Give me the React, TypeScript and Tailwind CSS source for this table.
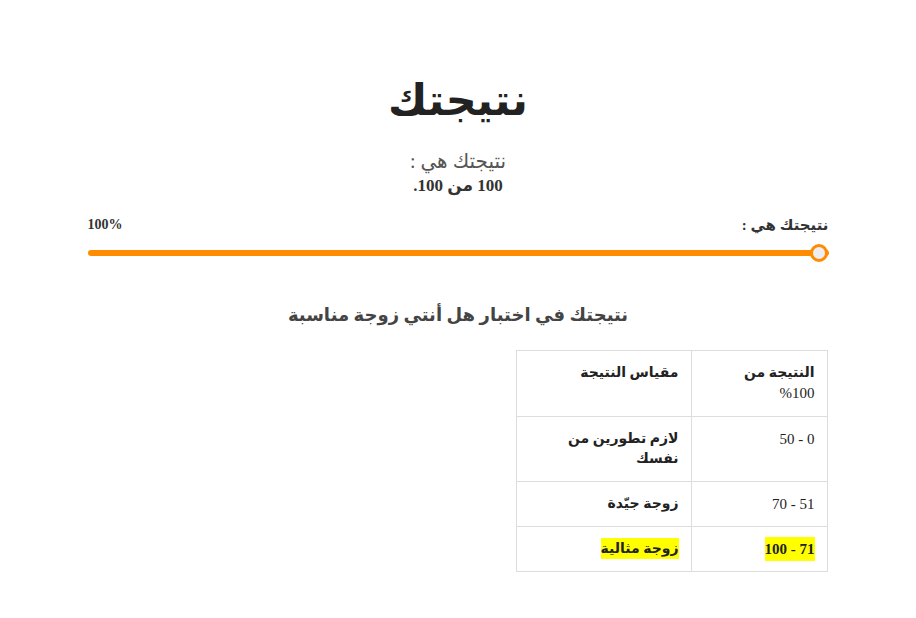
const rows = [
  { range: "0 - 50", label: "لازم تطورين من نفسك", hl: false },
  { range: "51 - 70", label: "زوجة جيّدة", hl: false },
  { range: "71 - 100", label: "زوجة مثالية", hl: true },
];

const App: React.FC = () => {
  return (
    <div
      dir="rtl"
      className="min-h-screen bg-white text-[#333]"
      style={{ fontFamily: '"Liberation Serif", "DejaVu Sans", serif' }}
    >
      <div className="mx-auto w-[741px] pt-[74px]">
        <h1 className="text-center text-[43px] font-bold leading-[54px] text-[#222]">
          نتيجتك
        </h1>
        <div className="mt-[20px] text-center text-[20px] leading-[26px] text-[#555]">
          نتيجتك هي :
        </div>
        <div className="text-center text-[17px] font-bold leading-[24px] text-[#333]">
          100 من 100.
        </div>

        <div className="mt-[17px] flex items-center justify-between text-[14px] font-bold leading-[20px] text-[#333]">
          <span className="text-[15px]">نتيجتك هي :</span>
          <span dir="ltr">100%</span>
        </div>
        <div className="relative mt-[15px] h-[6px] rounded-full bg-[#ff8c00]">
          <div className="absolute right-[1px] -top-[6px] h-[18px] w-[18px] rounded-full border-[3px] border-[#ff8c00] bg-[#eeeef2]" />
        </div>

        <h2 className="mt-[46px] text-center text-[18px] font-bold leading-[26px] text-[#444]">
          نتيجتك في اختبار هل أنتي زوجة مناسبة
        </h2>

        <table className="mr-[1px] mt-[22px] w-[312px] border-collapse text-[14px] leading-[20px] text-[#222]">
          <thead>
            <tr>
              <th className="w-[136px] border border-[#ddd] px-[12px] py-[12px] text-right align-top font-bold">
                النتيجة من
                <br />
                <span dir="ltr" className="inline-block text-[15px] font-normal">%100</span>
              </th>
              <th className="border border-[#ddd] px-[12px] py-[12px] text-right align-top font-bold">
                مقياس النتيجة
              </th>
            </tr>
          </thead>
          <tbody>
            {rows.map((r) => (
              <tr key={r.range}>
                <td className="border border-[#ddd] px-[12px] py-[12px] align-top text-[15px]">
                  <span className={r.hl ? "bg-[#ffff00] py-[4px] font-bold" : ""}>{r.range}</span>
                </td>
                <td className="border border-[#ddd] py-[12px] pl-[14px] pr-[12px] align-top font-bold">
                  <span className={r.hl ? "bg-[#ffff00] py-[3px]" : ""}>{r.label}</span>
                </td>
              </tr>
            ))}
          </tbody>
        </table>
      </div>
    </div>
  );
};

export default App;
